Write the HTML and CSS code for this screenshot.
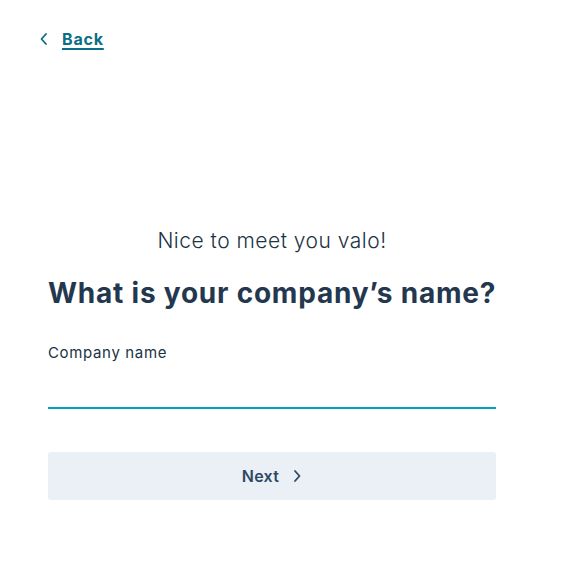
FILE: index.html
```html
<!DOCTYPE html>
<html lang="en">
<head>
<meta charset="utf-8">
<title>Company name</title>
<link rel="stylesheet" href="styles.css">
</head>
<body>
<div class="page">
  <header class="top">
    <a class="back" href="#">
      <svg class="back-icon" width="10" height="14" viewBox="0 0 10 14"><path d="M7 2 L2.5 7 L7 12" fill="none" stroke="currentColor" stroke-width="1.8" stroke-linecap="round" stroke-linejoin="round"/></svg>
      <span class="back-text">Back</span>
    </a>
  </header>
  <main class="form">
    <p class="greet">Nice to meet you valo!</p>
    <h1 class="title">What is your company’s name?</h1>
    <label class="field">
      <span class="label">Company name</span>
      <input class="input" type="text">
    </label>
    <button class="next" type="button">
      <span>Next</span>
      <svg width="10" height="14" viewBox="0 0 10 14"><path d="M3 2 L7.5 7 L3 12" fill="none" stroke="currentColor" stroke-width="1.8" stroke-linecap="round" stroke-linejoin="round"/></svg>
    </button>
  </main>
</div>
</body>
</html>
```
FILE: styles.css
```css
* { box-sizing: border-box; }
html, body { margin: 0; padding: 0; background: #fff; }
body { font-family: "Inter", "Noto Sans", sans-serif; color: #213343; }
.page { width: 573px; height: 562px; padding: 0 77px 0 48px; }
.top { padding-top: 29px; margin-left: -9px; }
.back { display: inline-flex; align-items: center; gap: 13px; color: #0b6e86; text-decoration: none; font-weight: 700; font-size: 16px; letter-spacing: 0.8px; }
.back-text { text-decoration: underline; text-underline-offset: 3px; text-decoration-thickness: 2px; }
.form { display: flex; flex-direction: column; padding-top: 178px; }
.greet { margin: 0; text-align: center; font-size: 21px; font-weight: 300; line-height: 26px; color: #213343; letter-spacing: 0.5px; }
.title { margin: 21px 0 0; font-size: 28px; font-weight: 700; line-height: 36px; color: #23384f; letter-spacing: 0.78px; white-space: nowrap; }
.field { display: flex; flex-direction: column; margin-top: 32px; }
.label { font-size: 15px; line-height: 20px; color: #213343; letter-spacing: 0.65px; }
.input { border: 0; border-bottom: 2px solid #00a4bd; height: 46px; outline: none; font: inherit; padding: 0; }
.next { margin-top: 43px; height: 48px; border: 0; border-radius: 3px; background: #eaf0f6; color: #2d4864; font-family: inherit; font-size: 16px; font-weight: 600; display: flex; align-items: center; justify-content: center; gap: 13px; padding: 0; letter-spacing: 0.3px; }
```
